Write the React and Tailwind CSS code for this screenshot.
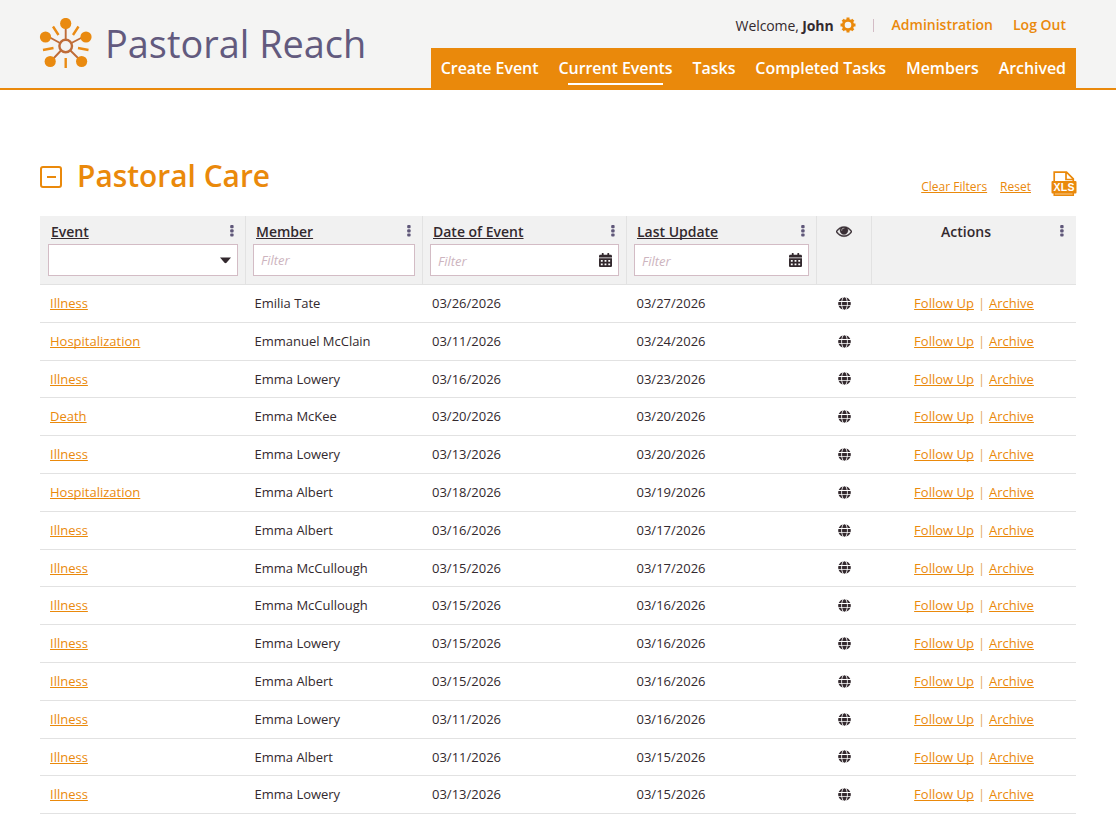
import { useState } from 'react'
import { FaCalendarAlt, FaGlobe } from 'react-icons/fa'

const navItems = ['Create Event', 'Current Events', 'Tasks', 'Completed Tasks', 'Members', 'Archived']

const events = [
  { type: 'Illness', member: 'Emilia Tate', date: '03/26/2026', updated: '03/27/2026' },
  { type: 'Hospitalization', member: 'Emmanuel McClain', date: '03/11/2026', updated: '03/24/2026' },
  { type: 'Illness', member: 'Emma Lowery', date: '03/16/2026', updated: '03/23/2026' },
  { type: 'Death', member: 'Emma McKee', date: '03/20/2026', updated: '03/20/2026' },
  { type: 'Illness', member: 'Emma Lowery', date: '03/13/2026', updated: '03/20/2026' },
  { type: 'Hospitalization', member: 'Emma Albert', date: '03/18/2026', updated: '03/19/2026' },
  { type: 'Illness', member: 'Emma Albert', date: '03/16/2026', updated: '03/17/2026' },
  { type: 'Illness', member: 'Emma McCullough', date: '03/15/2026', updated: '03/17/2026' },
  { type: 'Illness', member: 'Emma McCullough', date: '03/15/2026', updated: '03/16/2026' },
  { type: 'Illness', member: 'Emma Lowery', date: '03/15/2026', updated: '03/16/2026' },
  { type: 'Illness', member: 'Emma Albert', date: '03/15/2026', updated: '03/16/2026' },
  { type: 'Illness', member: 'Emma Lowery', date: '03/11/2026', updated: '03/16/2026' },
  { type: 'Illness', member: 'Emma Albert', date: '03/11/2026', updated: '03/15/2026' },
  { type: 'Illness', member: 'Emma Lowery', date: '03/13/2026', updated: '03/15/2026' },
]

const columns = 'grid grid-cols-[206px_177px_204px_190px_55px_204px]'

function Logo() {
  return (
    <svg width="54" height="54" viewBox="0 0 54 54" fill="none" strokeLinecap="butt">
      <g stroke="#bf6c38" strokeWidth="1.9">
        <path d="M26.7 22V10M21 25L10 19M32.4 25L44 19M22 32.5L13 42M31.4 32.5L41 42" />
        <circle cx="26.7" cy="28" r="6.3" strokeWidth="2.4" />
      </g>
      <g fill="#e98a10">
        <circle cx="26.7" cy="5.5" r="5.6" />
        <circle cx="6.5" cy="19" r="5.6" />
        <circle cx="47" cy="19" r="5.6" />
        <circle cx="11.2" cy="43.5" r="5.6" />
        <circle cx="42.6" cy="43.5" r="5.6" />
      </g>
      <g stroke="#ea8b14" strokeWidth="2.4">
        <path d="M14 8.5L19.5 17M39.5 8.5L34 17M4 32L14.5 30M49.5 32L39 30M26.7 40V50" />
      </g>
    </svg>
  )
}

function Gear() {
  return (
    <svg width="16" height="16" viewBox="0 0 16 16" fill="none" stroke="#ea890b">
      <circle cx="8" cy="8" r="4.7" strokeWidth="2.8" />
      <path d="M8 .5V3M8 13V15.5M.5 8H3M13 8H15.5M2.7 2.7L4.4 4.4M11.6 11.6L13.3 13.3M13.3 2.7L11.6 4.4M4.4 11.6L2.7 13.3" strokeWidth="3" />
    </svg>
  )
}

function Eye() {
  return (
    <svg width="16" height="16" viewBox="0 0 1792 1792" fill="#3a2f35" stroke="#3a2f35" strokeWidth="40">
      <path d="M1664 960q-152-236-381-353 61 104 61 225 0 185-131.5 316.5t-316.5 131.5-316.5-131.5-131.5-316.5q0-121 61-225-229 117-381 353 133 205 333.5 326.5t434.5 121.5 434.5-121.5 333.5-326.5zm-720-384q0-20-14-34t-34-14q-125 0-214.5 89.5t-89.5 214.5q0 20 14 34t34 14 34-14 14-34q0-86 61-147t147-61q20 0 34-14t14-34zm848 384q0 34-20 69-140 230-376.5 368.5t-499.5 138.5-499.5-139-376.5-368q-20-35-20-69t20-69q140-229 376.5-368t499.5-139 499.5 139 376.5 368q20 35 20 69z" />
    </svg>
  )
}

function XlsIcon() {
  return (
    <svg width="26" height="26" viewBox="0 0 26 26">
      <path d="M3.2 11V1.2H15.5L22.3 7.8V11M15 1.2V8.5H22.3" fill="none" stroke="#ea890b" strokeWidth="1.7" />
      <path d="M3.2 21V24.3H22.3V21" fill="#f8c98d" stroke="#ea890b" strokeWidth="1.5" />
      <rect x="0.5" y="10" width="25" height="12.4" rx="1" fill="#ea890b" />
      <text x="13" y="20" textAnchor="middle" fill="#fff" fontSize="10.5" fontWeight="700" fontFamily="Liberation Sans, sans-serif" textLength="21">XLS</text>
    </svg>
  )
}

function Dots() {
  return (
    <svg width="4" height="12" viewBox="0 0 4 12" fill="#5f5779">
      <rect x="0.2" y="0" width="3.4" height="3.2" rx="1" />
      <rect x="0.2" y="4.2" width="3.4" height="3.2" rx="1" />
      <rect x="0.2" y="8.4" width="3.4" height="3.2" rx="1" />
    </svg>
  )
}

function HeaderCell({ title, first, children }) {
  return (
    <div className={`border-r border-[#e2e2e2] pr-[7px] pt-[5px] ${first ? 'pl-2' : 'pl-[7px]'}`}>
      <div className="flex h-[23px] items-start justify-between pr-1 pl-[3px]">
        <a href="#" className="pt-px text-sm leading-5 font-semibold tracking-[-0.01px] underline underline-offset-1 [text-decoration-skip-ink:none]">{title}</a>
        <span className="pt-1"><Dots /></span>
      </div>
      {children}
    </div>
  )
}

function FilterInput({ value, onChange, calendar }) {
  return (
    <div className="flex h-8 items-center border border-[#d3bcc5] bg-white pr-1.5 pl-[7px]">
      <input
        value={value}
        onChange={onChange}
        placeholder="Filter"
        className={`w-full min-w-0 text-[13px] italic outline-none placeholder:text-[#cdb4be] ${calendar ? 'pt-[3px]' : 'pt-px'}`}
      />
      {calendar && <FaCalendarAlt className="h-[14px] w-[13px] shrink-0" preserveAspectRatio="none" />}
    </div>
  )
}

export default function App() {
  const [member, setMember] = useState('')
  const [eventDate, setEventDate] = useState('')
  const [lastUpdate, setLastUpdate] = useState('')

  return (
    <div className="h-[821px] overflow-hidden bg-white font-['Open_Sans',sans-serif] text-[#33292e]">
      <header className="flex h-[90px] justify-between border-b-2 border-[#ea890b] bg-[#f4f4f3] px-10">
        <div className="flex items-start">
          <div className="-ml-px pt-[18px]"><Logo /></div>
          <div className="ml-3 pt-4 text-[37.9px] leading-[54px] whitespace-nowrap text-[#625a7e]">Pastoral Reach</div>
        </div>

        <div className="flex flex-col items-end">
          <div className="flex h-12 shrink-0 items-center pt-0.5 pr-2.5 text-sm">
            <span className="pt-0.5 tracking-[-0.1px]">Welcome, <b>John</b></span>
            <span className="ml-1.5"><Gear /></span>
            <span className="ml-[17px] h-[13px] w-px bg-[#d3bcc5]" />
            <a href="#" className="ml-[18px] font-semibold text-[#ea890b]">Administration</a>
            <a href="#" className="ml-5 font-semibold text-[#ea890b]">Log Out</a>
          </div>
          <nav className="flex h-[42px] shrink-0 gap-5 bg-[#ea890b] px-2.5 text-base font-semibold tracking-[-0.06px] whitespace-nowrap text-white">
            {navItems.map(item => (
              <a key={item} href="#" className="flex flex-col pt-2 leading-6">
                {item}
                {item === 'Current Events' && <span className="mx-2.5 mt-[3px] h-0.5 bg-white" />}
              </a>
            ))}
          </nav>
        </div>
      </header>

      <main className="px-10">
        <div className="flex h-[126px] justify-between pt-[62px]">
          <div className="flex items-center self-start">
            <button className="mt-0.5 flex h-[22px] w-[22px] items-center justify-center rounded-[3px] border-2 border-[#ea890b]">
              <span className="h-0.5 w-[9px] bg-[#ea890b]" />
            </button>
            <h1 className="ml-[15px] text-[29.9px] leading-[48px] font-semibold text-[#ea890b]">Pastoral Care</h1>
          </div>
          <div className="mt-[19px] flex h-[26px] items-center self-start text-xs text-[#ea890b]">
            <a href="#" className="mt-1.5 underline underline-offset-1 [text-decoration-skip-ink:none]">Clear Filters</a>
            <a href="#" className="mt-1.5 ml-[13px] underline underline-offset-1 [text-decoration-skip-ink:none]">Reset</a>
            <a href="#" className="-mr-px ml-5"><XlsIcon /></a>
          </div>
        </div>

        <div className={`${columns} h-[69px] border-b border-[#e2e2e2] bg-[#f1f1f1]`}>
          <HeaderCell title="Event" first>
            <button className="flex h-8 w-full items-center justify-end border border-[#d3bcc5] bg-white pt-px pr-1.5">
              <svg width="11" height="7" viewBox="0 0 11 7" fill="#33292e"><path d="M0 .5H11L6.5 5.8Q5.5 6.6 4.5 5.8Z" /></svg>
            </button>
          </HeaderCell>
          <HeaderCell title="Member">
            <FilterInput value={member} onChange={e => setMember(e.target.value)} />
          </HeaderCell>
          <HeaderCell title="Date of Event">
            <FilterInput value={eventDate} onChange={e => setEventDate(e.target.value)} calendar />
          </HeaderCell>
          <HeaderCell title="Last Update">
            <FilterInput value={lastUpdate} onChange={e => setLastUpdate(e.target.value)} calendar />
          </HeaderCell>
          <div className="flex justify-center border-r border-[#e2e2e2] pt-[7px]"><Eye /></div>
          <div className="flex justify-between pt-[5px] pr-3">
            <span className="w-[188px] pt-px text-center text-sm leading-5 font-semibold">Actions</span>
            <span className="pt-1"><Dots /></span>
          </div>
        </div>

        {events.map((ev, i) => (
          <div key={i} className={`${columns} h-[37.8px] items-center border-b border-[#e2e2e2] pt-[0.8px] text-[13px]`}>
            <div className="pl-2.5">
              <a href="#" className="text-[#ea890b] underline underline-offset-1 [text-decoration-skip-ink:none]">{ev.type}</a>
            </div>
            <div className="pl-[8.6px] tracking-[-0.02px]">{ev.member}</div>
            <div className="pl-[9px]">{ev.date}</div>
            <div className="pl-[9.5px]">{ev.updated}</div>
            <div className="-mt-px flex justify-center"><FaGlobe className="h-[13px] w-[13px]" /></div>
            <div className="text-center text-[#ea890b]">
              <a href="#" className="underline underline-offset-1 [text-decoration-skip-ink:none]">Follow Up</a>
              <span className="mx-1 text-[#dfa75e]">|</span>
              <a href="#" className="underline underline-offset-1 [text-decoration-skip-ink:none]">Archive</a>
            </div>
          </div>
        ))}
      </main>
    </div>
  )
}
